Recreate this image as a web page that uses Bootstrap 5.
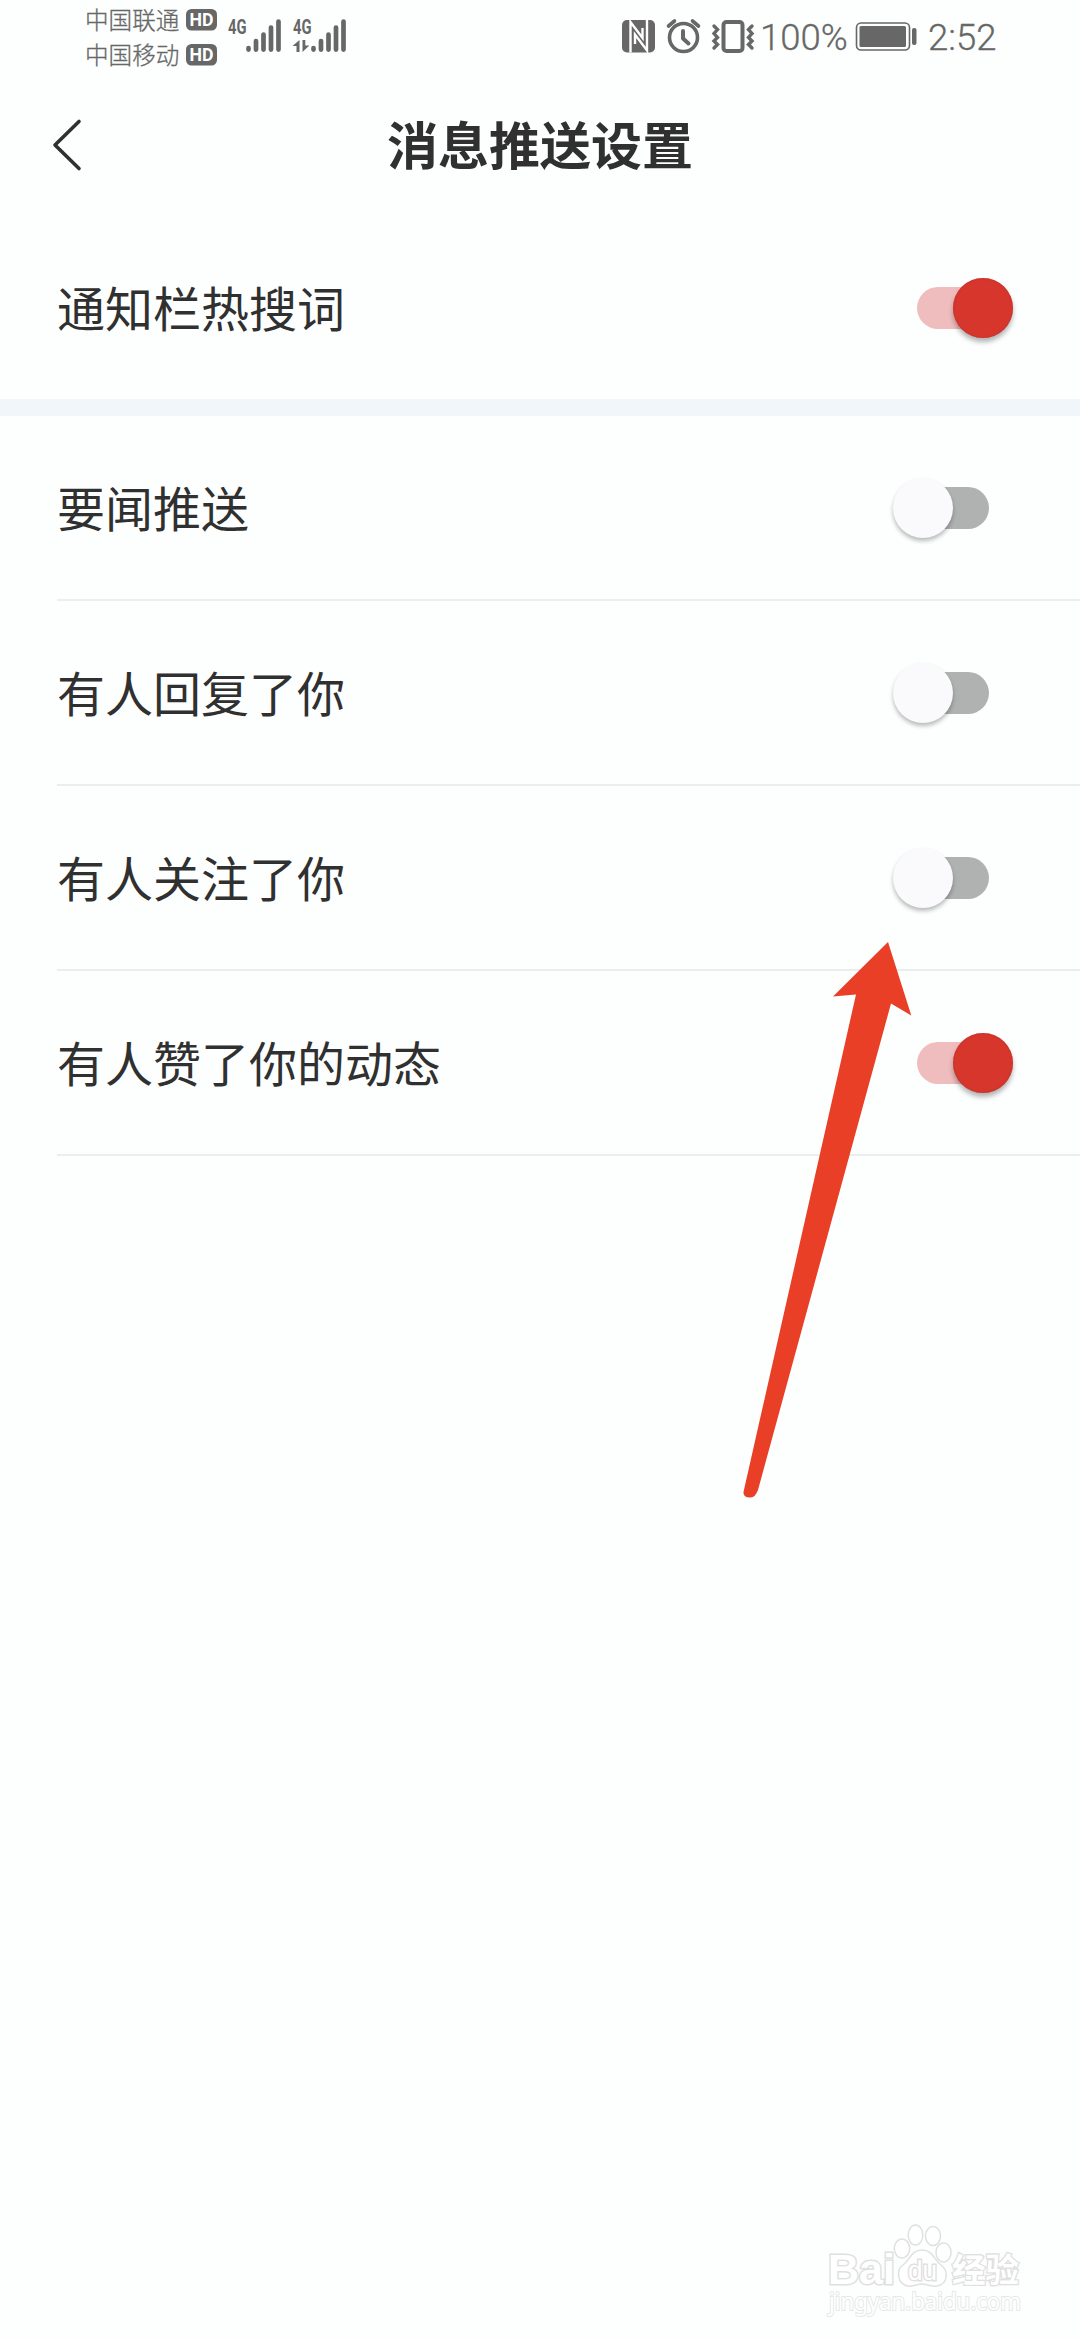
<!DOCTYPE html>
<html lang="zh-CN">
<head>
<meta charset="utf-8">
<meta name="viewport" content="width=device-width, initial-scale=1">
<title>消息推送设置</title>
<link href="https://cdn.jsdelivr.net/npm/bootstrap@5.3.0/dist/css/bootstrap.min.css" rel="stylesheet">
<style>
  body { background: #fdfefe; color: #2f302f; font-family: "Noto Sans CJK SC", sans-serif; }
  .screen { width: 1080px; height: 2340px; }
  .status { height: 73px; padding-left: 85px; color: #666766; }
  .status svg { display: block; }
  .carriers { width: 101px; font-size: 23.6px; line-height: 34.5px; font-weight: 300; padding-top: 2px; white-space: nowrap; -webkit-text-stroke: .3px #666766; }
  .hd { padding-top: 9px; gap: 13.5px; margin-right: 11px; }
  .tray { margin-left: 276px; }
  .digits { font-family: Roboto, sans-serif; font-weight: 300; font-size: 36.5px; line-height: 75px; white-space: nowrap; -webkit-text-stroke: .3px #666766; }
  .topbar { height: 143px; padding: 0 52px; }
  .topbar h1 { font-size: 51px; line-height: 60px; font-weight: 700; padding-bottom: 4px; }
  .topbar .side { width: 40px; }
  .setting { height: 185px; padding: 0 0 0 57px; }
  .setting .inner { height: 100%; border-bottom: 2px solid #eceeee; padding-right: 67px; }
  .setting.first { height: 183px; }
  .setting.first .inner { border-bottom: 0; }
  .setting label { font-size: 48px; line-height: 60px; padding-bottom: 4px; }
  .band { height: 17px; background: #f1f6fa; }
  .toggle { width: 120px; height: 60px; appearance: none; background: none; border: 0; padding: 0; }
  .toggle span { display: block; position: relative; height: 42px; width: 78px; border-radius: 21px; background: #b0b1b1; margin-left: 18px; }
  .toggle span::after { content: ""; position: absolute; width: 60px; height: 60px; border-radius: 50%; top: -9px; left: -18px; background: #fafafc; box-shadow: 0 3px 4px rgba(0,0,0,.27); }
  .toggle.on span { margin-left: 24px; background: #f0bdbe; }
  .toggle.on span::after { left: 35.5px; background: #d6362c; box-shadow: 0 4px 5px rgba(0,0,0,.3), inset 0 0 2px #b42e2c; }
  .pointer { position: absolute; left: 740px; top: 938px; pointer-events: none; }
  .brand { padding-right: 47px; }
  .brand text { fill: #fff; stroke: #dfe0e0; paint-order: stroke; }
</style>
</head>
<body>
<div class="screen d-flex flex-column position-relative overflow-hidden">

  <header class="status d-flex align-items-start">
    <div class="carriers"><div>中国联通</div><div>中国移动</div></div>
    <div class="hd d-flex flex-column">
      <svg width="31" height="21.5" viewBox="0 0 31 21.5"><rect width="31" height="21.5" rx="5.5" fill="#666766"/><text x="15.5" y="17.2" text-anchor="middle" font-family="Roboto" font-weight="700" font-size="18.5" textLength="24" lengthAdjust="spacingAndGlyphs" fill="#fff">HD</text></svg>
      <svg width="31" height="21.5" viewBox="0 0 31 21.5"><rect width="31" height="21.5" rx="5.5" fill="#666766"/><text x="15.5" y="17.2" text-anchor="middle" font-family="Roboto" font-weight="700" font-size="18.5" textLength="24" lengthAdjust="spacingAndGlyphs" fill="#fff">HD</text></svg>
    </div>
    <svg width="118" height="73" viewBox="228 0 118 73" fill="#666766">
      <g font-family="Roboto" font-weight="700" font-size="20"><text x="228" y="34" textLength="18.5" lengthAdjust="spacingAndGlyphs">4G</text><text x="293" y="34" textLength="18.5" lengthAdjust="spacingAndGlyphs">4G</text></g>
      <g stroke="#666766" stroke-width="4.7" stroke-linecap="round">
        <path d="M248.5 48v1.6M256 41v8.6M263.5 34.5v15.1M271 27.500v22.100M278.500 21.500v28.100"/>
        <path d="M313.500 48v1.600M321 41v8.600M328.500 34.500v15.100M336 27.500v22.100M343.500 21.500v28.100"/>
      </g>
      <path d="M299.500 40v12h-3v-6h-4zM302.500 40h2.800v5.500h4l-6.800 6.500z"/>
    </svg>
    <div class="tray d-flex">
      <svg width="138" height="73" viewBox="622 0 138 73" fill="none" stroke="#666766">
        <rect x="622" y="20" width="33" height="32.500" rx="5" fill="#666766" stroke="none"/>
        <path d="M630.500 52.500V22L642.500 38V28M647 20V50.500L635 34.500V44" stroke="#fff" stroke-width="2.400"/>
        <circle cx="683.500" cy="37.500" r="14" stroke-width="3.600"/>
        <path d="M683 31v7.500l5.500 5" stroke-width="4" stroke-linecap="round" stroke-linejoin="round"/>
        <path d="M668.500 26l6-5M698.500 26l-6-5" stroke-width="3.600" stroke-linecap="round"/>
        <rect x="723.500" y="22" width="19" height="29" rx="3" stroke-width="4"/>
        <path d="M714 26l3.500 3.500-3.500 4 3.500 4-3.500 3.500 3.500 3.500-3.500 3.500M752 26l-3.500 3.500 3.500 4-3.500 4 3.500 3.500-3.500 3.500 3.500 3.500" stroke-width="3.400" stroke-linecap="round"/>
      </svg>
      <span class="digits" style="width:95px">100%</span>
      <svg width="73" height="73" viewBox="855 0 73 73">
        <rect x="856.500" y="23" width="53" height="27" rx="4.500" fill="none" stroke="#666766" stroke-width="1.600"/>
        <rect x="859.500" y="26" width="46.500" height="21" rx="1.500" fill="#666766"/>
        <rect x="912" y="28" width="4.500" height="17" rx="2" fill="#666766"/>
      </svg>
      <span class="digits">2:52</span>
    </div>
  </header>

  <nav class="topbar d-flex align-items-center justify-content-between">
    <svg class="side" width="40" height="54" viewBox="52 117 40 54"><path d="M79 120.500L55 144l24 23.500" fill="none" stroke="#2f302f" stroke-width="3.600" stroke-linecap="round" stroke-linejoin="round"/></svg>
    <h1 class="m-0">消息推送设置</h1>
    <span class="side"></span>
  </nav>

  <main>
    <div class="setting first"><div class="inner d-flex align-items-center justify-content-between"><label>通知栏热搜词</label><button class="toggle on" aria-label="通知栏热搜词"><span></span></button></div></div>
    <div class="band"></div>
    <div class="setting"><div class="inner d-flex align-items-center justify-content-between"><label>要闻推送</label><button class="toggle" aria-label="要闻推送"><span></span></button></div></div>
    <div class="setting"><div class="inner d-flex align-items-center justify-content-between"><label>有人回复了你</label><button class="toggle" aria-label="有人回复了你"><span></span></button></div></div>
    <div class="setting"><div class="inner d-flex align-items-center justify-content-between"><label>有人关注了你</label><button class="toggle" aria-label="有人关注了你"><span></span></button></div></div>
    <div class="setting"><div class="inner d-flex align-items-center justify-content-between"><label>有人赞了你的动态</label><button class="toggle on" aria-label="有人赞了你的动态"><span></span></button></div></div>
  </main>

  <svg class="pointer" width="180" height="570" viewBox="740 938 180 570"><path fill="#e93f26" d="M888 942L911.300 1015.500 891 1003.500 758 1490Q755 1498 750 1497.500 743 1497 743.500 1492L856 994.500 833 996.500Z"/></svg>

  <footer class="brand mt-auto d-flex justify-content-end">
    <svg width="223" height="125" viewBox="810 2215 223 125" fill="#fff" stroke="#dfe0e0" stroke-width="1.500">
      <g font-family="Liberation Sans" font-weight="700">
        <text x="828" y="2284" font-size="43" stroke-width="3" textLength="67" lengthAdjust="spacingAndGlyphs">Bai</text>
        <ellipse cx="902" cy="2248.500" rx="7.700" ry="9.500"/><ellipse cx="915.500" cy="2235" rx="7.300" ry="10"/><ellipse cx="933" cy="2236" rx="7.500" ry="9.500"/><ellipse cx="943.500" cy="2252.500" rx="7.500" ry="9.500"/>
        <path d="M922 2250C911 2250 910 2260 903 2265C896 2270 897 2284 908 2286C914 2287 917 2284 922 2284C927 2284 930 2287 937 2286C948 2284 949 2271 941 2265C934 2260 933 2250 922 2250Z"/>
        <text x="908" y="2279.500" font-size="28" stroke-width="3" font-weight="400" textLength="29" lengthAdjust="spacingAndGlyphs">du</text>
      </g>
      <text x="952" y="2282" font-family="Noto Sans CJK SC" font-weight="700" font-size="33.500" stroke-width="2.600">经验</text>
      <text x="829" y="2310" font-family="Noto Sans" font-size="24" stroke-width="2" style="stroke:#e6e7e7" textLength="192" lengthAdjust="spacingAndGlyphs">jingyan.baidu.com</text>
    </svg>
  </footer>
</div>
<script src="https://cdn.jsdelivr.net/npm/bootstrap@5.3.0/dist/js/bootstrap.bundle.min.js"></script>
</body>
</html>
